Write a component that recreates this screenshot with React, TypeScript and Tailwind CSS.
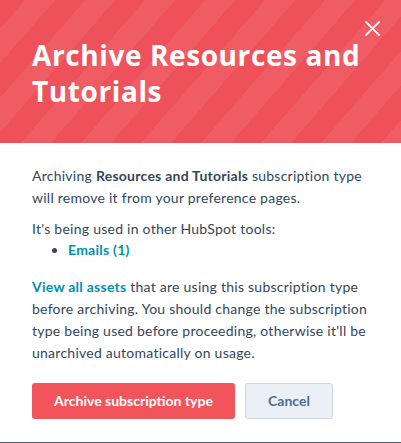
export default function App() {
  return (
    <div className="w-[401px] h-[443px] bg-white flex flex-col font-['Lato',sans-serif] border-b border-[#4f5b66]">
      <header className="relative h-[143px] shrink-0 px-8 pt-[37px] bg-[repeating-linear-gradient(131deg,#ee5159_0px,#ee5159_19px,#f05c63_19px,#f05c63_41.6px,#ee5159_41.6px,#ee5159_45.3px)]">
        <h1 className="font-['Open_Sans',sans-serif] text-[28px] leading-[36px] font-bold text-white tracking-[0.6px]">
          Archive Resources and Tutorials
        </h1>
        <button className="absolute right-[21px] top-[21px] w-[15px] h-[15px] text-white" aria-label="Close">
          <svg viewBox="0 0 15 15" width="15" height="15" fill="none" stroke="currentColor" strokeWidth="1.8" strokeLinecap="square">
            <path d="M1 1L14 14M14 1L1 14" />
          </svg>
        </button>
      </header>
      <section className="flex-1 px-8 pt-[22px] text-[14px] leading-[22px] tracking-[0.25px] text-[#33475b]">
        <p>
          Archiving <strong className="font-bold">Resources and Tutorials</strong> subscription type will remove it from your preference pages.
        </p>
        <p className="mt-[9px]">It's being used in other HubSpot tools:</p>
        <ul className="list-disc pl-[36px] marker:text-[#33475b]">
          <li className="leading-[20px]">
            <a className="font-bold text-[#0091ae]">Emails (1)</a>
          </li>
        </ul>
        <p className="mt-[16px]">
          <a className="font-bold text-[#0091ae]">View all assets</a> that are using this subscription type before archiving. You should change the subscription type being used before proceeding, otherwise it'll be unarchived automatically on usage.
        </p>
        <div className="mt-[19px] flex gap-[10px] tracking-normal">
          <button className="w-[203px] h-[36px] rounded-[3px] bg-[#f2545b] text-white text-[14px] font-bold">
            Archive subscription type
          </button>
          <button className="w-[88px] h-[36px] rounded-[3px] bg-[#eaf0f6] border border-[#cbd6e2] text-[#506e91] text-[14px] font-bold">
            Cancel
          </button>
        </div>
      </section>
    </div>
  );
}
